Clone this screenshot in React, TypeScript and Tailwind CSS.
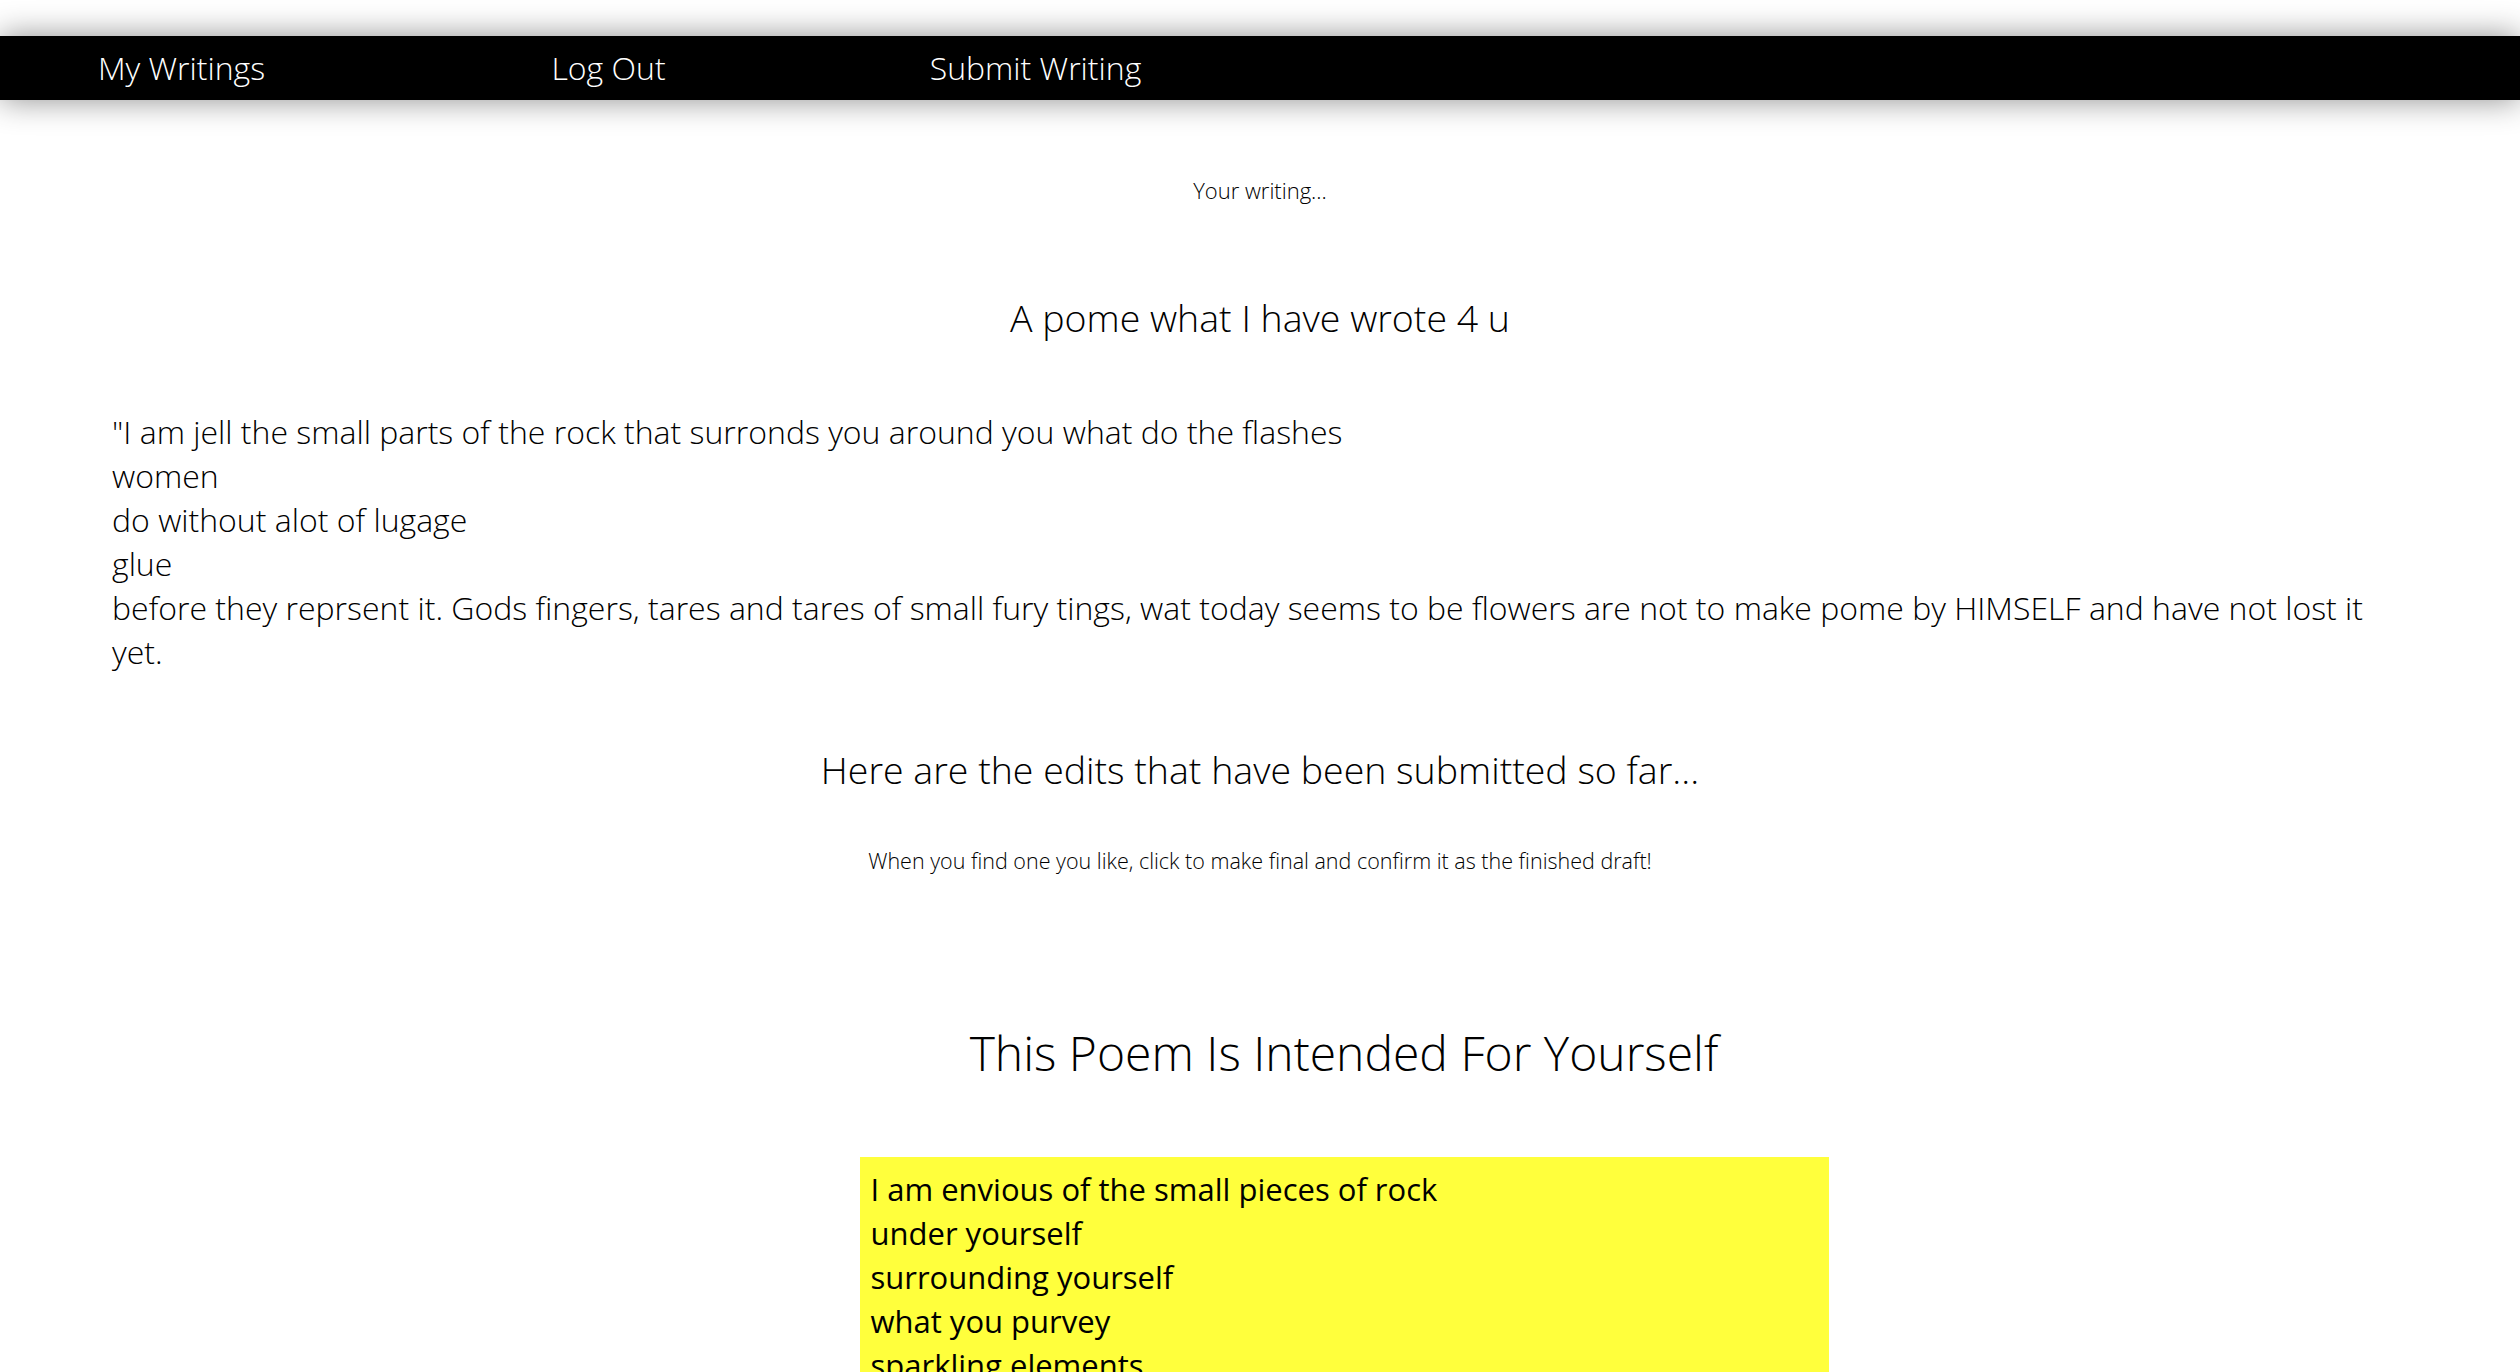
import React from 'react'

const NAV = ['My Writings', 'Log Out', 'Submit Writing']

const ORIGINAL = [
  '"I am jell the small parts of the rock that surronds you around you what do the flashes',
  'women',
  'do without alot of lugage',
  'glue',
  'before they reprsent it. Gods fingers, tares and tares of small fury tings, wat today seems to be flowers are not to make pome by HIMSELF and have not lost it yet.',
]

const EDIT = ['I am envious of the small pieces of rock', 'under yourself', 'surrounding yourself', 'what you purvey', 'sparkling elements']

const App = () => {
  return (
    <div className="min-h-screen bg-white text-black font-['Open_Sans',sans-serif] font-light pt-[36px]">
      <nav className="h-[64px] bg-black shadow-[0_0_32px_rgba(0,0,0,0.45)]">
        <ul className="flex h-full items-center -ml-[32px]">
          {NAV.map((item, index) => (
            <li key={index} className="w-[427px] text-center text-[32px] text-white">
              <a href="#">{item}</a>
            </li>
          ))}
        </ul>
      </nav>

      <main className="flex flex-col">
        <p className="mt-[74px] text-center text-[22px]">Your writing...</p>
        <h2 className="mt-[83px] text-center text-[37.5px]">A pome what I have wrote 4 u</h2>

        <div className="mt-[64px] px-[112px] text-[32px] leading-[44px]">
          {ORIGINAL.map((line, index) => (
            <div key={index}>{line}</div>
          ))}
        </div>

        <h2 className="mt-[68px] text-center text-[37.5px]">Here are the edits that have been submitted so far...</h2>
        <p className="mt-[46px] text-center text-[21.5px]">
          When you find one you like, click to make final and confirm it as the finished draft!
        </p>

        <section className="mt-[140px] pl-[168px]">
          <h1 className="text-center text-[48px]">This Poem Is Intended For Yourself</h1>
          <div className="mx-auto mt-[68px] w-[969px] bg-[#ffff3c] px-[11px] py-[10px] text-[31px] font-normal leading-[44px]">
            {EDIT.map((line, index) => (
              <div key={index}>{line}</div>
            ))}
          </div>
        </section>
      </main>
    </div>
  )
}

export default App
